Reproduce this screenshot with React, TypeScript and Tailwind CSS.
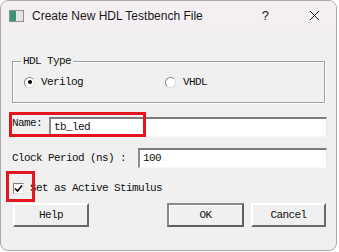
import React from 'react';

const mono = { fontFamily: '"Liberation Mono", "DejaVu Sans Mono", monospace' };

function Radio({ checked }: { checked?: boolean }) {
  return (
    <span className="w-[11px] h-[11px] rounded-full bg-white border border-t-[#8a8a8a] border-l-[#8a8a8a] border-b-[#dcdcdc] border-r-[#dcdcdc] flex items-center justify-center">
      {checked && <span className="w-[4px] h-[4px] rounded-full bg-black" />}
    </span>
  );
}

function Field({ value, className }: { value: string; className: string }) {
  return (
    <div
      className={`h-[20px] bg-white border-t-2 border-l-2 border-b border-r border-t-[#7c7c7c] border-l-[#8c8c8c] border-b-[#f8f8f8] border-r-[#e6e6e6] flex items-center pl-[3px] ${className}`}
    >
      {value}
    </div>
  );
}

function Btn({ label, primary, className }: { label: string; primary?: boolean; className: string }) {
  return (
    <div
      className={`h-[24px] bg-[#f0f0f0] flex items-center justify-center border-2 ${
        primary
          ? 'border-t-[#8a8a8a] border-l-[#8a8a8a] border-b-[#5e5e5e] border-r-[#5e5e5e] shadow-[inset_1px_1px_0_#ffffff]'
          : 'border-t-[#ffffff] border-l-[#ffffff] border-b-[#6a6a6a] border-r-[#6a6a6a]'
      } ${className}`}
    >
      {label}
    </div>
  );
}

export default function App() {
  return (
    <div className="w-[339px] h-[252px] bg-white">
      <div className="relative w-[337px] h-[251px] border border-[#a9a9a9] rounded-[8px] overflow-hidden bg-[#f0f0f0] flex flex-col">
        {/* title bar */}
        <div
          className="h-[29px] bg-[#f3eff3] flex items-center text-[12px] text-[#1a1a1a] shrink-0"
          style={{ fontFamily: '"Liberation Sans", Arial, sans-serif' }}
        >
          <div className="ml-[8px] w-[15px] h-[12px] border border-[#8c8c8c] bg-[#e4e4e4] flex">
            <div className="w-[6px] h-full bg-[#3f8f78]" />
          </div>
          <span className="ml-[8px]">Create New HDL Testbench File</span>
          <span className="ml-auto mr-[40px] text-[13px]">?</span>
          <svg width="11" height="11" viewBox="0 0 11 11" className="mr-[16px]">
            <path d="M1 1 L10 10 M10 1 L1 10" stroke="#222" strokeWidth="1" />
          </svg>
        </div>

        <div className="flex flex-col text-[#111] text-[11px] tracking-[-0.6px]" style={mono}>
          {/* group box */}
          <div className="relative ml-[11px] mt-[31px] w-[313px] h-[42px] border border-[#a0a0a0] shadow-[inset_1px_1px_0_#ffffff,1px_1px_0_#ffffff] flex items-center">
            <span className="absolute -top-[7px] left-[8px] px-[2px] bg-[#f0f0f0] leading-[12px]">HDL Type</span>
            <div className="ml-[11px] flex items-center gap-[6px]">
              <Radio checked />
              <span>Verilog</span>
            </div>
            <div className="ml-[82px] flex items-center gap-[7px]">
              <Radio />
              <span>VHDL</span>
            </div>
          </div>

          {/* name row */}
          <div className="mt-[14px] flex items-start">
            <span className="ml-[11px] mt-[0px] w-[37px] leading-[12px]">Name:</span>
            <Field value="tb_led" className="w-[278px]" />
          </div>

          {/* clock period */}
          <div className="mt-[11px] flex items-center">
            <span className="ml-[11px] w-[126px]">Clock Period (ns) :</span>
            <Field value="100" className="w-[189px]" />
          </div>

          {/* checkbox */}
          <div className="mt-[14px] h-[12px] flex items-center">
            <span className="ml-[12px] w-[11px] h-[11px] bg-white border border-t-[#7c7c7c] border-l-[#7c7c7c] border-b-[#e0e0e0] border-r-[#e0e0e0] flex items-center justify-center">
              <svg width="9" height="9" viewBox="0 0 9 9">
                <path d="M1 4.5 L3.5 7 L8 1.5" stroke="#000" strokeWidth="1.6" fill="none" />
              </svg>
            </span>
            <span className="ml-[6px]">Set as Active Stimulus</span>
          </div>

          {/* buttons */}
          <div className="mt-[9px] flex items-center">
            <Btn label="Help" className="ml-[12px] w-[76px]" />
            <Btn label="OK" primary className="ml-[78px] w-[77px]" />
            <Btn label="Cancel" className="ml-[7px] w-[75px]" />
          </div>
        </div>

        {/* red highlight annotations */}
        <div className="absolute left-[8px] top-[111px] w-[137px] h-[25px] border-[3px] border-[#e3151f]" />
        <div className="absolute left-[5px] top-[170px] w-[29px] h-[31px] border-[3px] border-[#e3151f]" />
      </div>
    </div>
  );
}
